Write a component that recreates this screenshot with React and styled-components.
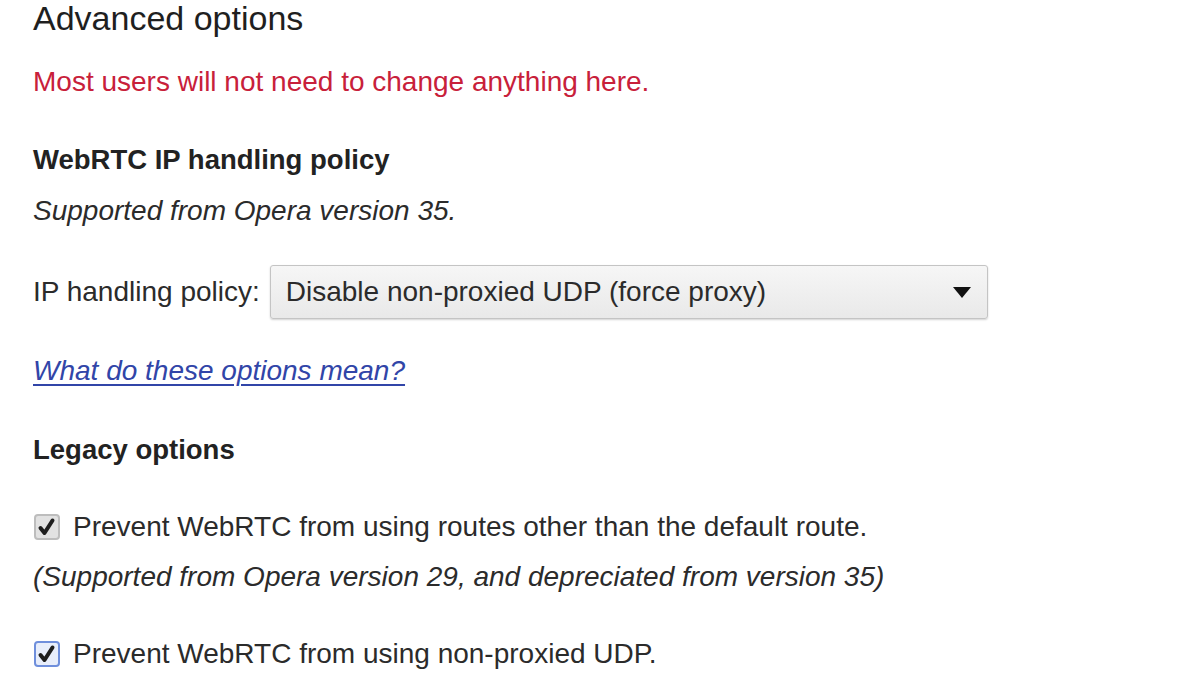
import React from "react";
import styled, { createGlobalStyle } from "styled-components";

const Global = createGlobalStyle`
  html, body { margin: 0; padding: 0; background: #ffffff; }
  body { font-family: "Liberation Sans", Helvetica, Arial, sans-serif; color: #2b2b2b; }
`;

const Page = styled.div`
  width: 1200px;
  height: 675px;
  overflow: hidden;
  padding: 0 0 0 33px;
  box-sizing: border-box;
  display: flex;
  flex-direction: column;
`;

const Title = styled.h1`
  margin: 0;
  font-size: 34px;
  font-weight: 400;
  line-height: 36px;
  color: #1f1f1f;
`;

const Text = styled.p`
  margin: ${(p) => p.$mt || 0}px 0 0 0;
  font-size: 28px;
  line-height: 32px;
  font-style: ${(p) => (p.$italic ? "italic" : "normal")};
  color: ${(p) => p.$color || "#2b2b2b"};
`;

const SectionTitle = styled.h2`
  margin: ${(p) => p.$mt}px 0 0 0;
  font-size: 27.5px;
  font-weight: 700;
  line-height: 32px;
  color: #222;
`;

const FieldRow = styled.div`
  margin-top: ${(p) => p.$mt}px;
  display: flex;
  align-items: center;
  gap: 10px;
`;

const Label = styled.span`
  font-size: 28px;
  line-height: 32px;
  color: #2b2b2b;
`;

const Select = styled.div`
  width: 718px;
  height: 54px;
  box-sizing: border-box;
  border: 1px solid #c4c4c4;
  border-radius: 3px;
  background: linear-gradient(#f6f6f6, #e9e9e9);
  box-shadow: 0 1px 2px rgba(0, 0, 0, 0.18);
  display: flex;
  align-items: center;
  justify-content: space-between;
  padding: 0 16px 0 15px;
  font-size: 28px;
  color: #2b2b2b;
`;

const Arrow = styled.span`
  width: 0;
  height: 0;
  border-left: 9px solid transparent;
  border-right: 9px solid transparent;
  border-top: 11px solid #111;
`;

const Link = styled.a`
  margin-top: ${(p) => p.$mt}px;
  align-self: flex-start;
  font-size: 28px;
  line-height: 32px;
  font-style: italic;
  color: #3145a8;
  text-decoration: underline;
  text-underline-offset: 4px;
  text-decoration-thickness: 2px;
`;

const CheckRow = styled.label`
  margin-top: ${(p) => p.$mt}px;
  display: flex;
  align-items: center;
  gap: 13px;
  padding-left: 1px;
`;

const Box = styled.span`
  width: 26px;
  height: 26px;
  box-sizing: border-box;
  border-radius: 4px;
  border: 2px solid ${(p) => (p.$focus ? "#6f8fdc" : "#bdbdbd")};
  background: ${(p) => (p.$focus ? "#e8eefb" : "#e2e2e2")};
  display: flex;
  align-items: center;
  justify-content: center;
`;

const Check = ({ focus }) => (
  <Box $focus={focus}>
    <svg width="20" height="20" viewBox="0 0 20 20">
      <path
        d="M3.5 11 L7.5 16 L15.5 3.5"
        fill="none"
        stroke="#1e1e1e"
        strokeWidth="4"
        strokeLinecap="round"
        strokeLinejoin="round"
      />
    </svg>
  </Box>
);

export default function App() {
  return (
    <>
      <Global />
      <Page>
        <Title>Advanced options</Title>
        <Text $mt={30} $color="#c8203a">
          Most users will not need to change anything here.
        </Text>
        <SectionTitle $mt={46}>WebRTC IP handling policy</SectionTitle>
        <Text $mt={19} $italic>
          Supported from Opera version 35.
        </Text>
        <FieldRow $mt={38}>
          <Label>IP handling policy:</Label>
          <Select>
            <span>Disable non-proxied UDP (force proxy)</span>
            <Arrow />
          </Select>
        </FieldRow>
        <Link $mt={36} href="#">
          What do these options mean?
        </Link>
        <SectionTitle $mt={47}>Legacy options</SectionTitle>
        <CheckRow $mt={45}>
          <Check />
          <Label>Prevent WebRTC from using routes other than the default route.</Label>
        </CheckRow>
        <Text $mt={18} $italic>
          (Supported from Opera version 29, and depreciated from version 35)
        </Text>
        <CheckRow $mt={45}>
          <Check focus />
          <Label>Prevent WebRTC from using non-proxied UDP.</Label>
        </CheckRow>
      </Page>
    </>
  );
}
